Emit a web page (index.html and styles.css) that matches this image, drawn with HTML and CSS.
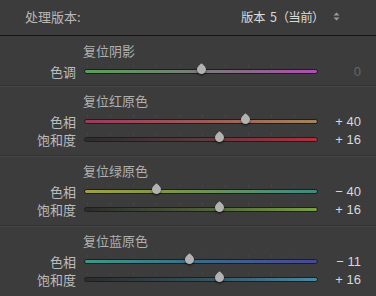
FILE: index.html
```html
<!DOCTYPE html>
<html lang="zh-CN">
<head>
    <meta charset="UTF-8">
    <title>相机校准</title>
    <link rel="stylesheet" href="styles.css">
</head>
<body>
    <div class="panel">
        <div class="process">
            <span class="process-label">处理版本:</span>
            <span class="process-value">
                <span class="version">版本 5（当前）</span>
                <svg class="spin" width="7" height="9" viewBox="0 0 7 9">
                    <path d="M3.5 0.5 L6.5 3.5 L0.5 3.5 Z" fill="#9a9a9a"/>
                    <path d="M3.5 8.5 L6.5 5.5 L0.5 5.5 Z" fill="#9a9a9a"/>
                </svg>
            </span>
        </div>

        <section class="group first">
            <h3 class="group-title">复位阴影</h3>
            <div class="row">
                <span class="label">色调</span>
                <div class="track tint"><span class="thumb" style="left: 50%"></span></div>
                <span class="value dim">0</span>
            </div>
        </section>

        <section class="group">
            <h3 class="group-title">复位红原色</h3>
            <div class="row">
                <span class="label">色相</span>
                <div class="track red-hue"><span class="thumb" style="left: 69%"></span></div>
                <span class="value">+ 40</span>
            </div>
            <div class="row">
                <span class="label">饱和度</span>
                <div class="track red-sat"><span class="thumb" style="left: 58%"></span></div>
                <span class="value">+ 16</span>
            </div>
        </section>

        <section class="group">
            <h3 class="group-title">复位绿原色</h3>
            <div class="row">
                <span class="label">色相</span>
                <div class="track green-hue"><span class="thumb" style="left: 31%"></span></div>
                <span class="value">&minus; 40</span>
            </div>
            <div class="row">
                <span class="label">饱和度</span>
                <div class="track green-sat"><span class="thumb" style="left: 58%"></span></div>
                <span class="value">+ 16</span>
            </div>
        </section>

        <section class="group last">
            <h3 class="group-title">复位蓝原色</h3>
            <div class="row">
                <span class="label">色相</span>
                <div class="track blue-hue"><span class="thumb" style="left: 45%"></span></div>
                <span class="value">&minus; 11</span>
            </div>
            <div class="row">
                <span class="label">饱和度</span>
                <div class="track blue-sat"><span class="thumb" style="left: 58%"></span></div>
                <span class="value">+ 16</span>
            </div>
        </section>
    </div>
</body>
</html>
```

FILE: styles.css
```css
/* Resetting default margin and padding */
* {
    margin: 0;
    padding: 0;
    box-sizing: border-box;
}

body {
    font-family: "Noto Sans CJK SC", "Noto Sans", sans-serif;
    background-color: #3c3c3c;
    color: #c4c4c4;
    width: 376px;
    height: 296px;
    overflow: hidden;
}

.process {
    height: 36px;
    display: flex;
    align-items: center;
    justify-content: space-between;
    padding: 0 36px 3px 25px;
    border-bottom: 1px solid #141414;
    font-size: 13px;
}

.process-label {
    color: #b8b8b8;
}

.process-value {
    display: flex;
    align-items: center;
    gap: 9px;
    color: #dadada;
}

.version {
    font-size: 12.5px;
    letter-spacing: -0.6px;
    word-spacing: 3px;
    white-space: pre;
}

.group {
    padding: 4px 0 7px;
    border-bottom: 1px solid #333;
    box-shadow: 0 1px 0 #454545;
}

.group.first {
    padding-bottom: 5px;
}

.group.last {
    border-bottom: none;
    box-shadow: none;
}

.group-title {
    height: 22px;
    line-height: 22px;
    padding-left: 83px;
    font-size: 13px;
    font-weight: normal;
    color: #b0b0b0;
}

.row {
    display: grid;
    grid-template-columns: 77px 241px 43px;
    align-items: center;
    height: 18px;
    font-size: 13px;
}

.label {
    text-align: right;
    padding-right: 1px;
    color: #bcbcbc;
}

.track {
    position: relative;
    height: 5px;
    margin-left: 7px;
    border: 1px solid #1e1e1e;
    border-radius: 3px;
}

/* faint tick marks above the track */
.track::before {
    content: "";
    position: absolute;
    left: 2px;
    right: 2px;
    top: -5px;
    height: 2px;
    background: repeating-linear-gradient(to right, #474747 0 1px, transparent 1px 23px);
}

.thumb {
    position: absolute;
    top: -5px;
    width: 9px;
    height: 9px;
    margin-left: -4.5px;
    background: #b2b2b2;
    border-radius: 1px 50% 50% 50%;
    transform: rotate(45deg);
    box-shadow: 1px 1px 2px rgba(0, 0, 0, 0.6);
}

.value {
    text-align: right;
    color: #d8d8d8;
    font-family: "Liberation Sans", sans-serif;
    font-size: 13px;
}

.value.dim {
    color: #666;
}

.tint {
    background: linear-gradient(to right, #5a9d5a, #6a8a6a 30%, #7a7a7a 50%, #8a6a8a 70%, #b04cb4);
}

.red-hue {
    background: linear-gradient(to right, #9a3a5e, #9a5a58 50%, #a4845a);
}

.red-sat {
    background: linear-gradient(to right, #2c2c2c, #5a3a40 50%, #b0303e);
}

.green-hue {
    background: linear-gradient(to right, #a0a040, #7a9448 40%, #3c8a84);
}

.green-sat {
    background: linear-gradient(to right, #2c2c2c, #4e5e3a 50%, #78a040);
}

.blue-hue {
    background: linear-gradient(to right, #3c9a86, #3a6a8a 50%, #4a4696);
}

.blue-sat {
    background: linear-gradient(to right, #2c2c2c, #35505a 50%, #4a8aa4);
}
```
